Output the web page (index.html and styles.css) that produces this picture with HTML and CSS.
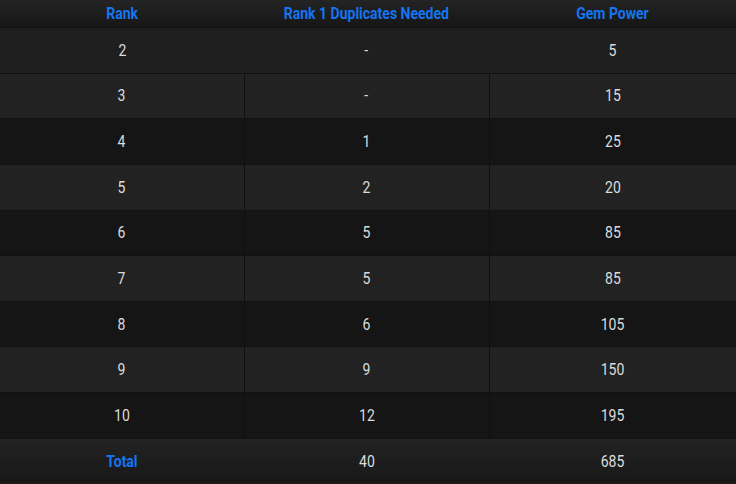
FILE: index.html
```html
<!DOCTYPE html>
<html>
<head>
<meta charset="utf-8">
<link rel="stylesheet" href="styles.css">
</head>
<body>
<table class="tbl">
  <colgroup>
    <col class="col1">
    <col class="col2">
    <col class="col3">
  </colgroup>
  <thead>
    <tr class="head">
      <th><span class="c">Rank</span></th>
      <th><span class="c">Rank 1 Duplicates Needed</span></th>
      <th><span class="c">Gem Power</span></th>
    </tr>
  </thead>
  <tbody>
    <tr class="first"><td><span class="c">2</span></td><td><span class="c">-</span></td><td><span class="c">5</span></td></tr>
    <tr class="light"><td><span class="c">3</span></td><td><span class="c">-</span></td><td><span class="c">15</span></td></tr>
    <tr class="dark"><td><span class="c">4</span></td><td><span class="c">1</span></td><td><span class="c">25</span></td></tr>
    <tr class="light"><td><span class="c">5</span></td><td><span class="c">2</span></td><td><span class="c">20</span></td></tr>
    <tr class="dark"><td><span class="c">6</span></td><td><span class="c">5</span></td><td><span class="c">85</span></td></tr>
    <tr class="light"><td><span class="c">7</span></td><td><span class="c">5</span></td><td><span class="c">85</span></td></tr>
    <tr class="dark"><td><span class="c">8</span></td><td><span class="c">6</span></td><td><span class="c">105</span></td></tr>
    <tr class="light"><td><span class="c">9</span></td><td><span class="c">9</span></td><td><span class="c">150</span></td></tr>
    <tr class="dark"><td><span class="c">10</span></td><td><span class="c">12</span></td><td><span class="c">195</span></td></tr>
  </tbody>
  <tfoot>
    <tr class="foot">
      <td class="total"><span class="c">Total</span></td>
      <td><span class="c">40</span></td>
      <td><span class="c">685</span></td>
    </tr>
  </tfoot>
</table>
</body>
</html>
```

FILE: styles.css
```css
html, body {
  margin: 0;
  padding: 0;
  background: #161616;
}
.tbl {
  width: 736px;
  border-collapse: collapse;
  table-layout: fixed;
  font-family: Roboto, "Liberation Sans", sans-serif;
  font-size: 16px;
  color: #dcdcdc;
  text-align: center;
}
.col1 { width: 244px; }
.col2 { width: 245px; }
.col3 { width: 247px; }
.tbl th, .tbl td {
  padding: 0;
  text-align: center;
  vertical-align: middle;
}
.c {
  display: inline-block;
  transform: scaleX(0.875);
}
.head th {
  height: 27px;
  color: #1574f0;
  font-weight: bold;
  background: linear-gradient(#242424, #161616);
  border-bottom: 1px solid #111;
}
.tbl tbody td {
  height: 44.65px;
  border-bottom: 1px solid #111;
}
.first td {
  background: #1f1f1f;
}
.light td {
  background: #222;
  border-left: 1px solid #0f0f0f;
}
.dark td {
  background: #151515;
  border-left: 1px solid #0f0f0f;
}
.tbl tbody tr td:first-child {
  border-left: none;
}
.foot td {
  height: 45px;
  background: linear-gradient(#232323, #171717);
}
.foot .total {
  color: #1574f0;
  font-weight: bold;
}
```
